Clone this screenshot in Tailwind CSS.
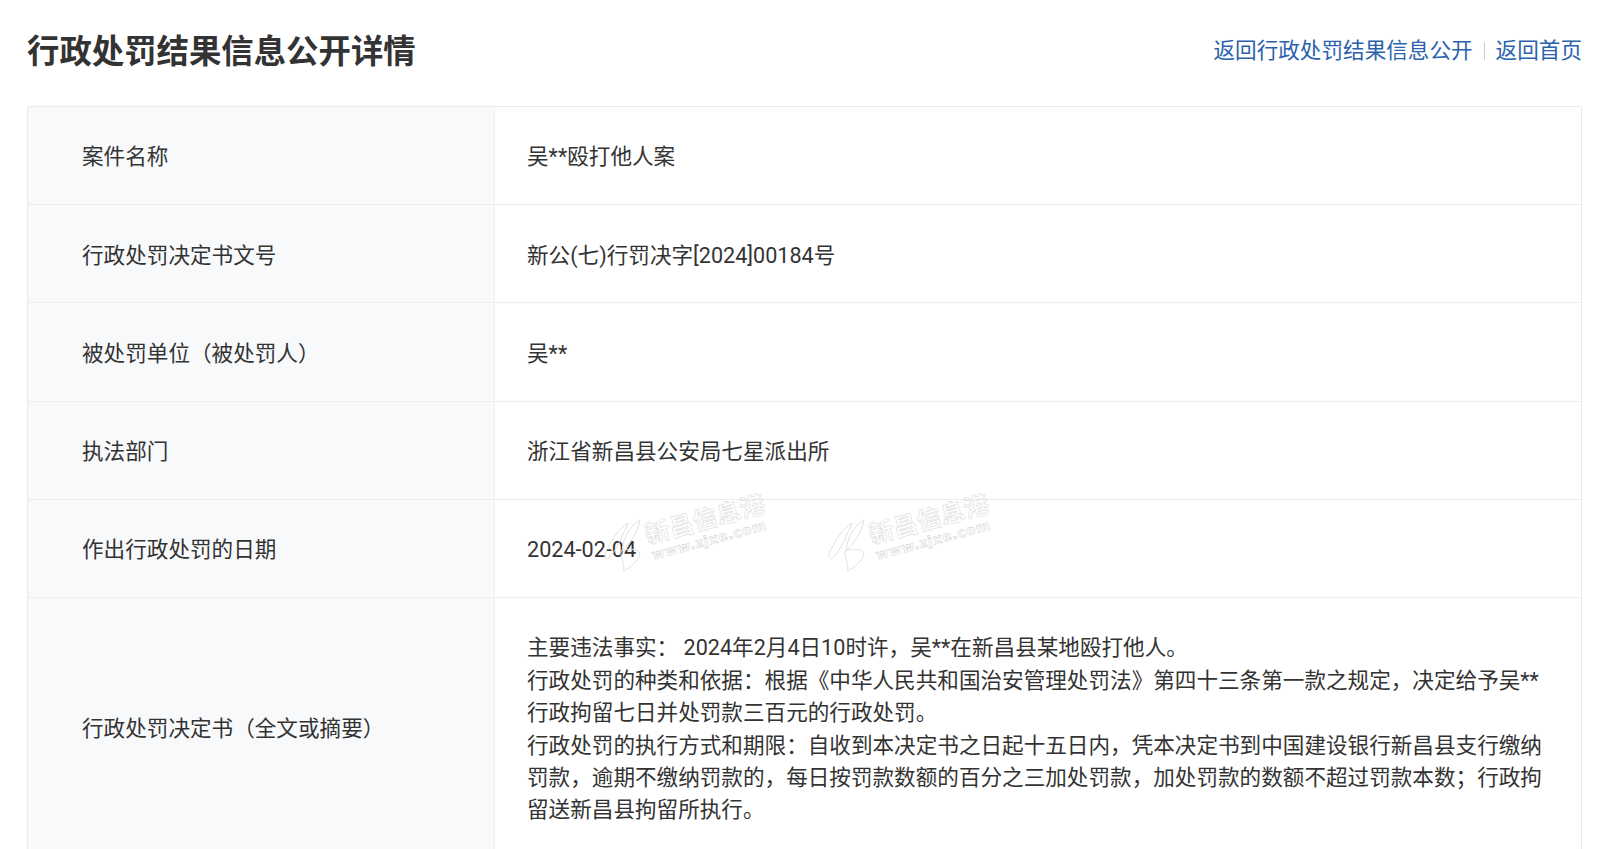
<!DOCTYPE html>
<html lang="zh-CN">
<head>
<meta charset="utf-8">
<title>行政处罚结果信息公开详情</title>
<script src="https://cdn.jsdelivr.net/npm/@tailwindcss/browser@4"></script>
</head>
<body class="relative h-[849px] overflow-hidden bg-white text-[#333] font-['Roboto','Noto_Sans_CJK_SC',sans-serif] text-[21.6px] leading-[32.4px]">
  <div class="ml-[27px] mr-[17px]">
    <!-- header -->
    <div class="flex items-center justify-between h-[106px] pb-[2px]">
      <h1 class="text-[32.4px] leading-[48px] font-bold">行政处罚结果信息公开详情</h1>
      <div class="flex items-center mb-[2px] text-[#2a62ad]">
        <a href="#">返回行政处罚结果信息公开</a>
        <span class="w-px h-[18px] bg-[#ccc] mx-[11px]"></span>
        <a href="#">返回首页</a>
      </div>
    </div>

    <!-- table -->
    <div class="grid grid-cols-[467px_1fr] border-t border-l border-r border-[#e8eaec]">
      <div class="bg-[#f8f9fb] border-r border-b border-[#eceef0] pl-[54px] pt-[34.4px] pb-[30.4px] flex items-center">案件名称</div>
      <div class="border-b border-[#eceef0] px-[32px] pt-[34.4px] pb-[30.4px]">吴**殴打他人案</div>

      <div class="bg-[#f8f9fb] border-r border-b border-[#eceef0] pl-[54px] pt-[34.4px] pb-[30.4px] flex items-center">行政处罚决定书文号</div>
      <div class="border-b border-[#eceef0] px-[32px] pt-[34.4px] pb-[30.4px]">新公(七)行罚决字[2024]00184号</div>

      <div class="bg-[#f8f9fb] border-r border-b border-[#eceef0] pl-[54px] pt-[34.4px] pb-[30.4px] flex items-center">被处罚单位（被处罚人）</div>
      <div class="border-b border-[#eceef0] px-[32px] pt-[34.4px] pb-[30.4px]">吴**</div>

      <div class="bg-[#f8f9fb] border-r border-b border-[#eceef0] pl-[54px] pt-[34.4px] pb-[30.4px] flex items-center">执法部门</div>
      <div class="border-b border-[#eceef0] px-[32px] pt-[34.4px] pb-[30.4px]">浙江省新昌县公安局七星派出所</div>

      <div class="bg-[#f8f9fb] border-r border-b border-[#eceef0] pl-[54px] pt-[34.4px] pb-[30.4px] flex items-center">作出行政处罚的日期</div>
      <div class="border-b border-[#eceef0] px-[32px] pt-[34.4px] pb-[30.4px]">2024-02-04</div>

      <div class="bg-[#f8f9fb] border-r border-b border-[#eceef0] pl-[54px] pt-[34.4px] pb-[30.4px] flex items-center">行政处罚决定书（全文或摘要）</div>
      <div class="border-b border-[#eceef0] px-[32px] pt-[34.4px] pb-[30.4px]">
        <p>主要违法事实： 2024年2月4日10时许，吴**在新昌县某地殴打他人。</p>
        <p>行政处罚的种类和依据：根据《中华人民共和国治安管理处罚法》第四十三条第一款之规定，决定给予吴**行政拘留七日并处罚款三百元的行政处罚。</p>
        <p>行政处罚的执行方式和期限：自收到本决定书之日起十五日内，凭本决定书到中国建设银行新昌县支行缴纳罚款，逾期不缴纳罚款的，每日按罚款数额的百分之三加处罚款，加处罚款的数额不超过罚款本数；行政拘留送新昌县拘留所执行。</p>
      </div>
    </div>
  </div>

  <!-- watermarks -->
  <div class="absolute left-[604px] top-[490px] w-[170px] h-[85px] pointer-events-none">
    <svg class="absolute left-0 top-[28px]" width="38" height="55" viewBox="0 0 38 55" fill="none" stroke="#e2e2e2" stroke-width="1"><path d="M36 2C27 7 19 20 18 33C25 27 34 14 36 2Z"/><path d="M24 5C15 10 6 24 1 36C0 41 3 42 6 39C12 32 19 17 24 5Z"/><path d="M17 33C25 30 36 31 36 36C35 43 25 51 19 53C22 46 16 40 17 33Z"/></svg>
    <div class="absolute left-[42px] top-[29px] -rotate-[15deg] origin-left whitespace-nowrap text-[24.5px] leading-[34px] font-bold text-transparent [-webkit-text-stroke:0.6px_#ddd]">新昌信息港</div>
    <div class="absolute left-[48px] top-[56px] -rotate-[15deg] origin-left whitespace-nowrap text-[13.5px] leading-[18px] font-bold tracking-[0.8px] text-transparent font-['DejaVu_Sans',sans-serif] [-webkit-text-stroke:0.5px_#ccc]">www.zjxe.com</div>
  </div>
  <div class="absolute left-[828px] top-[490px] w-[170px] h-[85px] pointer-events-none">
    <svg class="absolute left-0 top-[28px]" width="38" height="55" viewBox="0 0 38 55" fill="none" stroke="#e2e2e2" stroke-width="1"><path d="M36 2C27 7 19 20 18 33C25 27 34 14 36 2Z"/><path d="M24 5C15 10 6 24 1 36C0 41 3 42 6 39C12 32 19 17 24 5Z"/><path d="M17 33C25 30 36 31 36 36C35 43 25 51 19 53C22 46 16 40 17 33Z"/></svg>
    <div class="absolute left-[42px] top-[29px] -rotate-[15deg] origin-left whitespace-nowrap text-[24.5px] leading-[34px] font-bold text-transparent [-webkit-text-stroke:0.6px_#ddd]">新昌信息港</div>
    <div class="absolute left-[48px] top-[56px] -rotate-[15deg] origin-left whitespace-nowrap text-[13.5px] leading-[18px] font-bold tracking-[0.8px] text-transparent font-['DejaVu_Sans',sans-serif] [-webkit-text-stroke:0.5px_#ccc]">www.zjxe.com</div>
  </div>
</body>
</html>
